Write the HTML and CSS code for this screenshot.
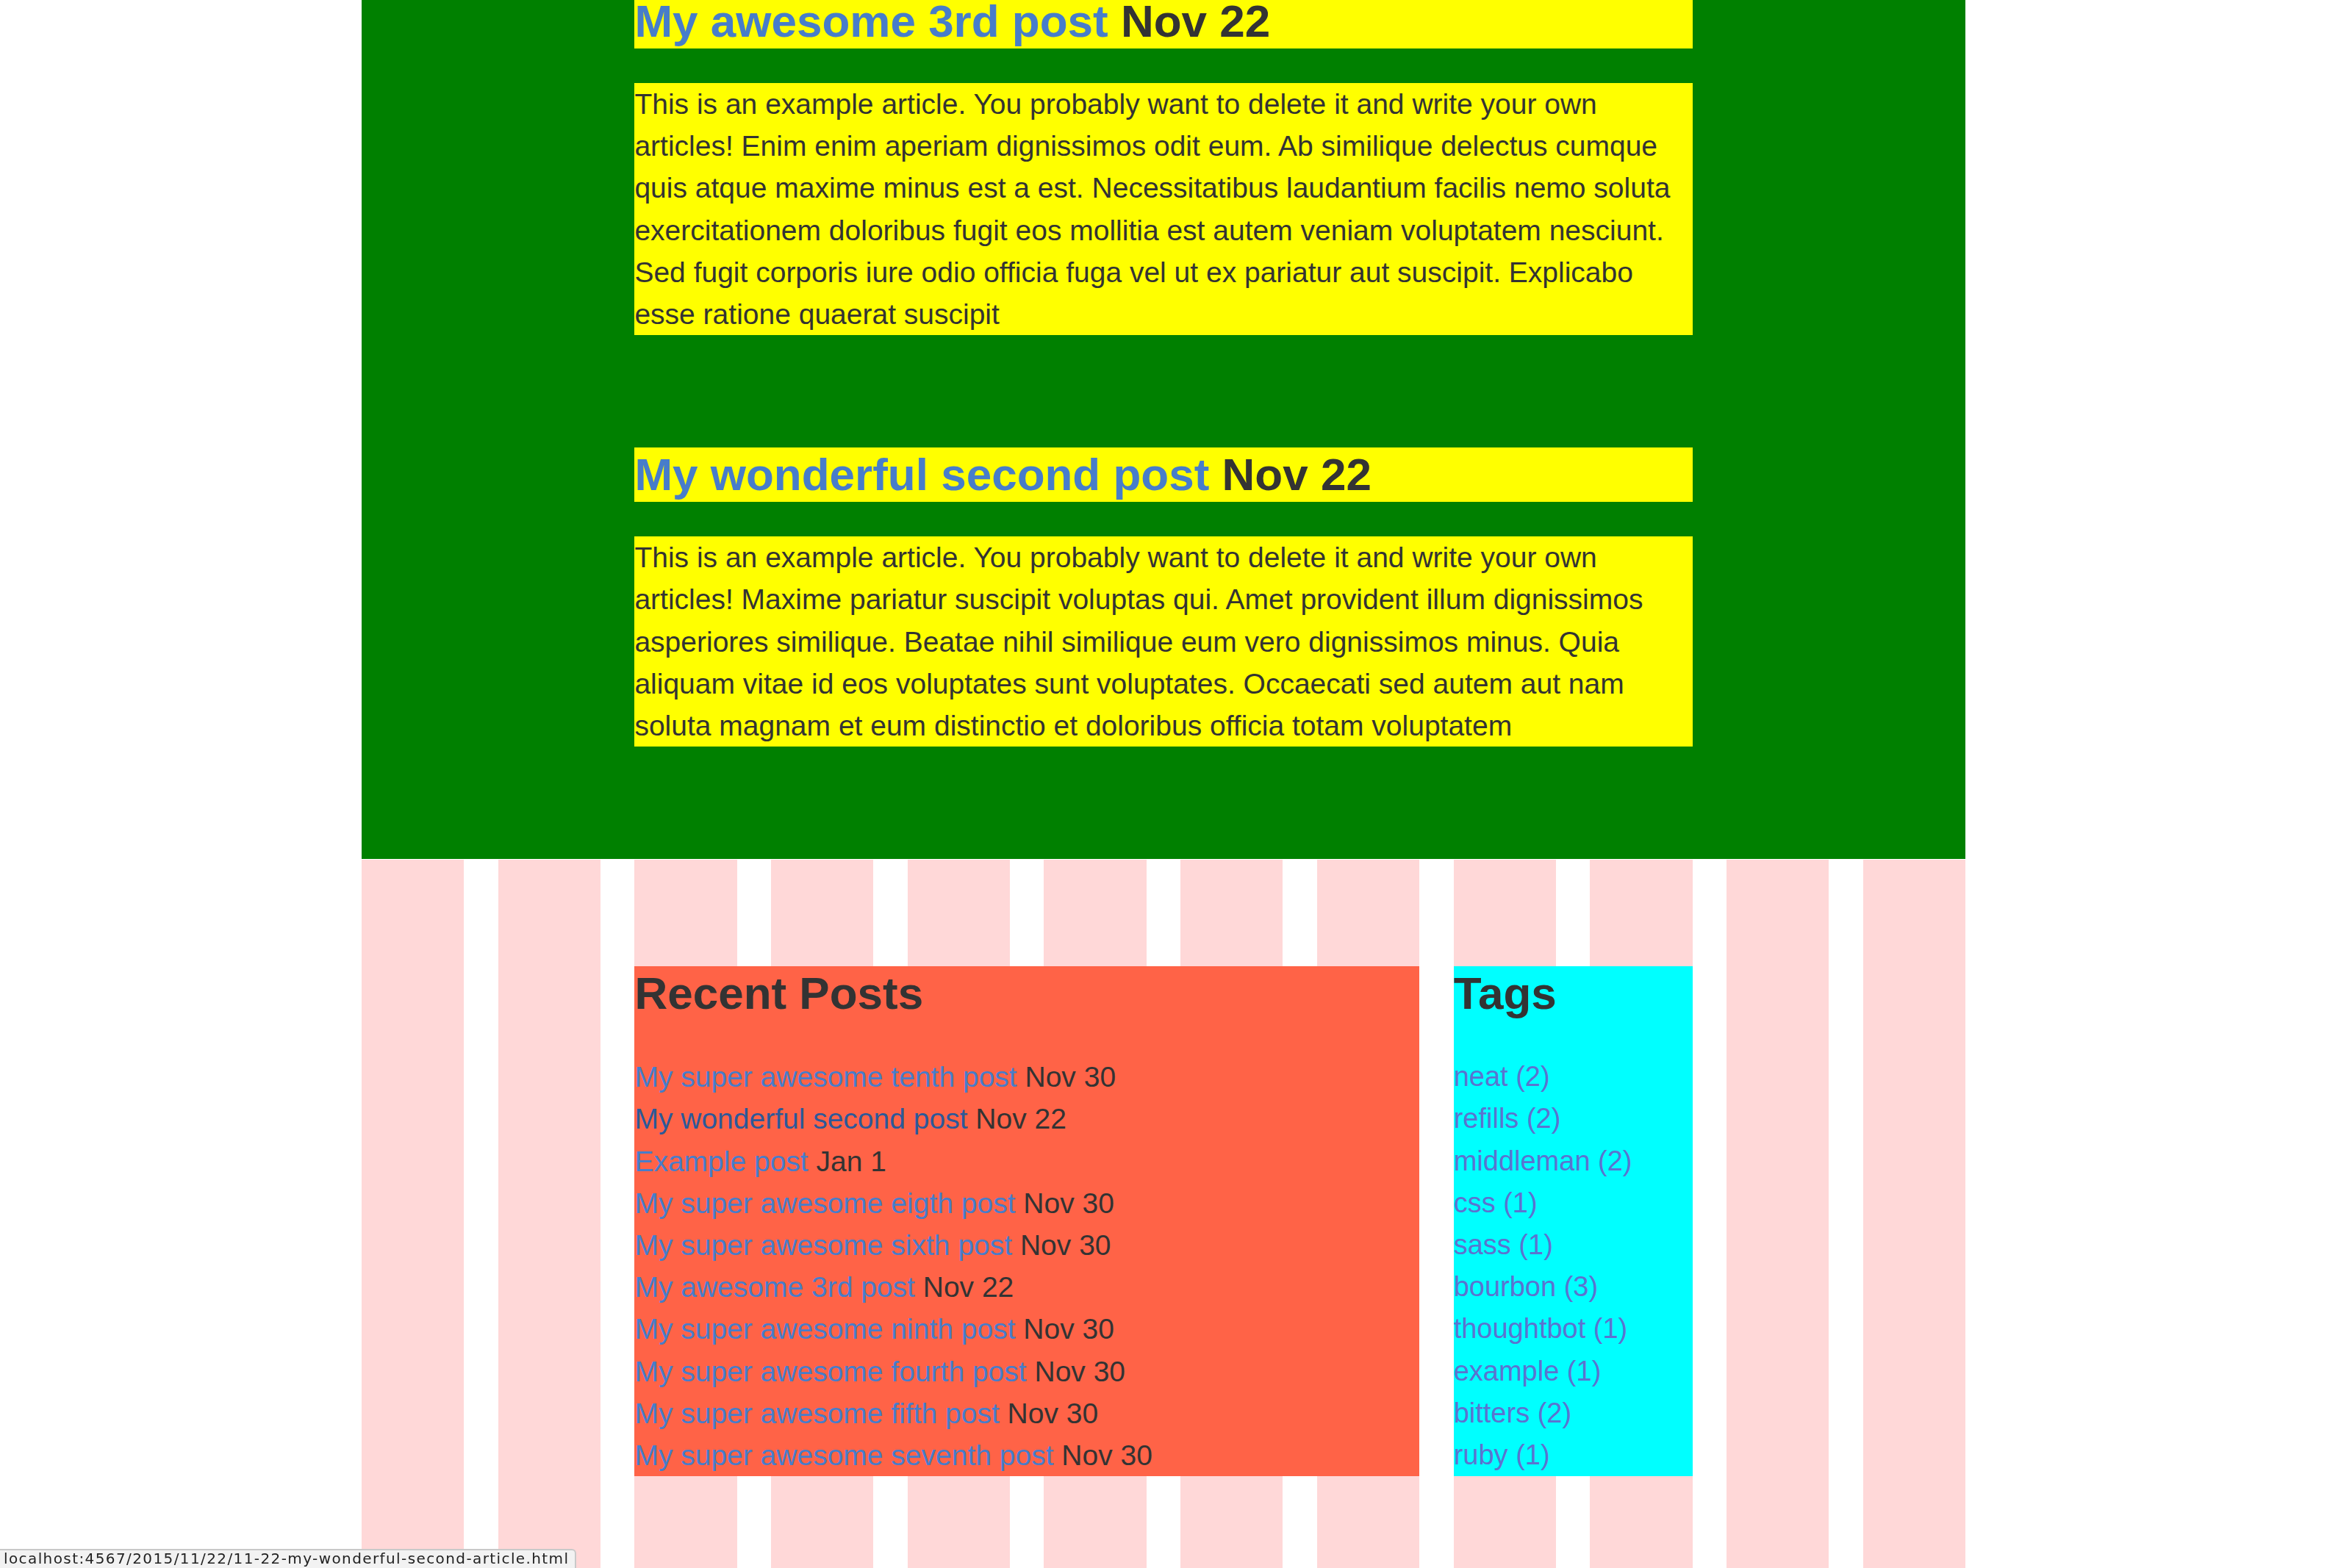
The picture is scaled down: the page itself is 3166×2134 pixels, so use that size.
FILE: index.html
```html
<!DOCTYPE html>
<html lang="en">
<head>
<meta charset="utf-8">
<title>Blog</title>
<link rel="stylesheet" href="styles.css">
</head>
<body>
<div class="container">
  <main class="main">
    <article class="post post-first">
      <h2 class="post-title"><a href="#">My awesome 3rd post</a> Nov 22</h2>
      <p class="post-body">This is an example article. You probably want to delete it and write your own articles! Enim enim aperiam dignissimos odit eum. Ab similique delectus cumque quis atque maxime minus est a est. Necessitatibus laudantium facilis nemo soluta exercitationem doloribus fugit eos mollitia est autem veniam voluptatem nesciunt. Sed fugit corporis iure odio officia fuga vel ut ex pariatur aut suscipit. Explicabo esse ratione quaerat suscipit</p>
    </article>
    <article class="post">
      <h2 class="post-title"><a href="#">My wonderful second post</a> Nov 22</h2>
      <p class="post-body">This is an example article. You probably want to delete it and write your own articles! Maxime pariatur suscipit voluptas qui. Amet provident illum dignissimos asperiores similique. Beatae nihil similique eum vero dignissimos minus. Quia aliquam vitae id eos voluptates sunt voluptates. Occaecati sed autem aut nam soluta magnam et eum distinctio et doloribus officia totam voluptatem</p>
    </article>
  </main>
  <footer class="footer">
    <section class="recent">
      <h2 class="side-title">Recent Posts</h2>
      <ul class="side-list">
        <li><a href="#">My super awesome tenth post</a> Nov 30</li>
        <li><a href="#" class="hover">My wonderful second post</a> Nov 22</li>
        <li><a href="#">Example post</a> Jan 1</li>
        <li><a href="#">My super awesome eigth post</a> Nov 30</li>
        <li><a href="#">My super awesome sixth post</a> Nov 30</li>
        <li><a href="#">My awesome 3rd post</a> Nov 22</li>
        <li><a href="#">My super awesome ninth post</a> Nov 30</li>
        <li><a href="#">My super awesome fourth post</a> Nov 30</li>
        <li><a href="#">My super awesome fifth post</a> Nov 30</li>
        <li><a href="#">My super awesome seventh post</a> Nov 30</li>
      </ul>
    </section>
    <section class="tags">
      <h2 class="side-title">Tags</h2>
      <ul class="side-list tag-list">
        <li><a href="#">neat (2)</a></li>
        <li><a href="#">refills (2)</a></li>
        <li><a href="#">middleman (2)</a></li>
        <li><a href="#">css (1)</a></li>
        <li><a href="#">sass (1)</a></li>
        <li><a href="#">bourbon (3)</a></li>
        <li><a href="#">thoughtbot (1)</a></li>
        <li><a href="#">example (1)</a></li>
        <li><a href="#">bitters (2)</a></li>
        <li><a href="#">ruby (1)</a></li>
      </ul>
    </section>
  </footer>
</div>
<div class="status-bar">localhost:4567/2015/11/22/11-22-my-wonderful-second-article.html</div>
</body>
</html>
```

FILE: styles.css
```css
html, body {
  margin: 0;
  padding: 0;
  background: #ffffff;
}

body {
  font-family: "Liberation Sans", Arial, Helvetica, sans-serif;
  color: #333333;
  overflow: hidden;
}

a {
  color: #477dca;
  text-decoration: none;
}

a.hover {
  color: #2c5999;
}

.container {
  width: 2182px;
  margin: 0 auto;
}

.main {
  display: grid;
  grid-template-columns: repeat(12, 1fr);
  column-gap: 46.5px;
  background: #008000;
  margin-top: -8px;
}

.post {
  grid-column: 3 / span 8;
  margin-bottom: 153px;
}

.post-title {
  margin: 0 0 47px;
  font-size: 62px;
  line-height: 74px;
  font-weight: bold;
  background: #ffff00;
}

.post-body {
  margin: 0;
  font-size: 39px;
  line-height: 57.2px;
  background: #ffff00;
}

.footer {
  display: grid;
  grid-template-columns: repeat(12, 1fr);
  column-gap: 46.5px;
  align-items: start;
  margin-top: 1px;
  padding: 145px 0 140px;
  background-image: repeating-linear-gradient(to right, #ffd8d8 0, #ffd8d8 139.2px, #ffffff 139.2px, #ffffff 185.7px);
}

.recent {
  grid-column: 3 / span 6;
  background: #ff6347;
}

.tags {
  grid-column: 9 / span 2;
  background: #00ffff;
}

.side-title {
  margin: 0 0 48px;
  font-size: 62px;
  line-height: 74px;
  font-weight: bold;
}

.side-list {
  margin: 0;
  padding: 0;
  list-style: none;
  font-size: 39px;
  line-height: 57.2px;
}

.tag-list {
  font-size: 38px;
}

.tag-list a {
  color: #5b73d0;
}

.status-bar {
  position: fixed;
  left: 0;
  bottom: 0;
  height: 24px;
  padding: 0 8px 0 5px;
  background: #f2f2f2;
  border-top: 2px solid #c9c9c9;
  border-right: 2px solid #c9c9c9;
  border-top-right-radius: 6px;
  font-family: "DejaVu Sans", "Liberation Sans", sans-serif;
  font-size: 20px;
  letter-spacing: 1.4px;
  line-height: 22px;
  color: #222222;
  white-space: nowrap;
  overflow: hidden;
}
```
